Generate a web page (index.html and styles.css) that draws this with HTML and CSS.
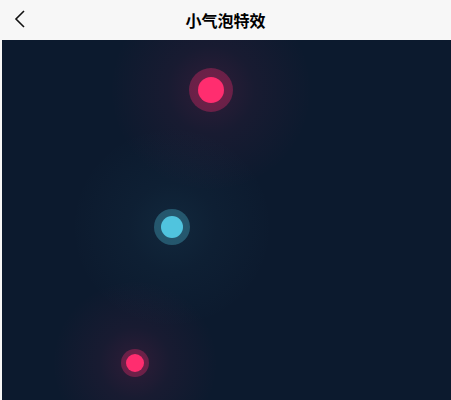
FILE: index.html
```html
<!DOCTYPE html>
<html lang="zh">
<head>
<meta charset="utf-8">
<link rel="stylesheet" href="styles.css">
</head>
<body>
<div class="page">
  <header class="nav">
    <span class="back">
      <svg width="14" height="20" viewBox="0 0 14 20"><path d="M11 2 L3 10 L11 18" fill="none" stroke="#111" stroke-width="1.6"/></svg>
    </span>
    <h1 class="title">小气泡特效</h1>
  </header>
  <main class="stage">
    <div class="bubble pink big" style="left:209px;top:50px"></div>
    <div class="bubble cyan mid" style="left:170px;top:187px"></div>
    <div class="bubble pink small" style="left:133px;top:323px"></div>
  </main>
</div>
</body>
</html>
```
FILE: styles.css
```css
html, body { margin: 0; padding: 0; }
body { background: #f7f7f7; font-family: "Noto Sans CJK SC", "Liberation Sans", sans-serif; width: 451px; height: 400px; overflow: hidden; }
.page { display: flex; flex-direction: column; height: 400px; }
.nav { height: 40px; background: #f7f7f7; display: flex; align-items: center; justify-content: center; position: relative; flex: none; }
.back { position: absolute; left: 13px; top: 9px; display: flex; }
.title { margin: 0; font-size: 16px; font-weight: 700; color: #000; line-height: 40px; }
.stage { flex: 1; margin-left: 2px; background: #0c1a2e; position: relative; overflow: hidden; isolation: isolate; }
.bubble { position: absolute; border-radius: 50%; transform: translate(-50%, -50%); z-index: 1; }
.bubble::before { content: ""; position: absolute; left: 50%; top: 50%; width: 220px; height: 220px; transform: translate(-50%, -50%); border-radius: 50%; z-index: -1; }
.pink { background: #ff2d6f; }
.cyan { background: #50c4de; }
.pink::before { background: radial-gradient(circle, rgba(255,45,111,0.14) 0%, rgba(255,45,111,0.05) 28%, rgba(255,45,111,0) 65%); }
.cyan::before { background: radial-gradient(circle, rgba(80,196,222,0.08) 0%, rgba(80,196,222,0.03) 28%, rgba(80,196,222,0) 65%); }
.big { width: 26px; height: 26px; box-shadow: 0 0 0 9px rgba(255,45,111,0.32); }
.mid { width: 22px; height: 22px; box-shadow: 0 0 0 7px rgba(80,196,222,0.32); }
.small { width: 18px; height: 18px; box-shadow: 0 0 0 5px rgba(255,45,111,0.32); }
.small::before { width: 180px; height: 180px; }
```
